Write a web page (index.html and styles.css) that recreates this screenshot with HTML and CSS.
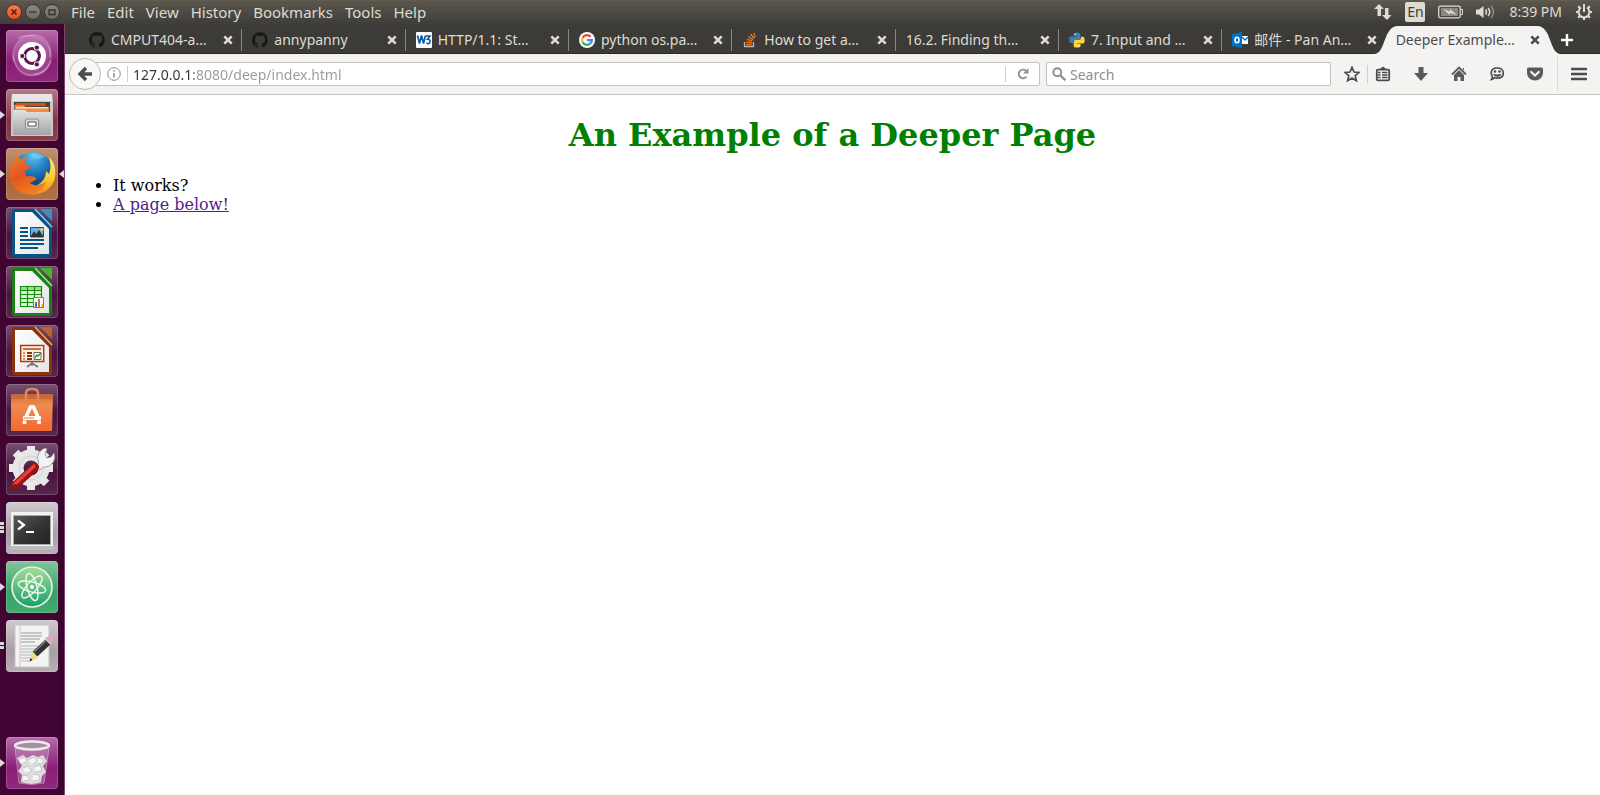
FILE: index.html
```html
<!DOCTYPE html>
<html lang="en">
<head>
<meta charset="utf-8">
<title>Deeper Example Page</title>
<link rel="stylesheet" href="styles.css">
</head>
<body>
<svg class="defs" aria-hidden="true">
  <defs>
    <linearGradient id="silver" x1="0" y1="0" x2="0" y2="1"><stop offset="0" stop-color="#e2e2e2"/><stop offset="1" stop-color="#a4a4a4"/></linearGradient>
    <linearGradient id="paper" x1="0" y1="0" x2="1" y2="1"><stop offset="0" stop-color="#fff"/><stop offset="1" stop-color="#e4e4e4"/></linearGradient>
    <linearGradient id="orange" x1="0" y1="0" x2="0" y2="1"><stop offset="0" stop-color="#c96f35"/><stop offset=".3" stop-color="#f18b50"/><stop offset="1" stop-color="#f06a30"/></linearGradient>
    <linearGradient id="screen" x1="0" y1="0" x2="1" y2="1"><stop offset="0" stop-color="#5b5b5b"/><stop offset=".5" stop-color="#353535"/><stop offset="1" stop-color="#222"/></linearGradient>
    <linearGradient id="atomg" x1="0" y1="0" x2="0" y2="1"><stop offset="0" stop-color="#a9dc9a"/><stop offset="1" stop-color="#15a06c"/></linearGradient>
    <radialGradient id="globe" cx=".5" cy=".1" r=".8"><stop offset="0" stop-color="#5cc4ee"/><stop offset=".5" stop-color="#1c76b8"/><stop offset="1" stop-color="#0b2a60"/></radialGradient>
    <linearGradient id="fox" x1="0" y1="0" x2=".6" y2="1"><stop offset="0" stop-color="#ef8034"/><stop offset=".5" stop-color="#e4551f"/><stop offset="1" stop-color="#f58420"/></linearGradient>
    <linearGradient id="flame" x1="0" y1="0" x2="0" y2="1"><stop offset="0" stop-color="#fff07a"/><stop offset=".6" stop-color="#fcc62c"/><stop offset="1" stop-color="#f4861e"/></linearGradient>
    <symbol id="close" viewBox="0 0 10 10"><path d="M1.300 1.300l7.400 7.400M8.700 1.300L1.300 8.700" fill="none" stroke="currentColor" stroke-width="2.600"/></symbol>
    <symbol id="github" viewBox="0 0 16 16"><path fill="#191717" d="M8 0a8 8 0 0 0-2.500 15.600c.4.1.5-.2.5-.4v-1.500c-2.200.5-2.700-1-2.700-1-.4-.9-.9-1.200-.9-1.200-.7-.5.1-.5.1-.5.8.1 1.200.8 1.200.8.7 1.200 1.900.9 2.300.7.1-.5.3-.9.5-1.100-1.800-.2-3.600-.9-3.600-4 0-.9.3-1.600.8-2.100-.1-.2-.4-1 .1-2.100 0 0 .7-.2 2.200.8a7.600 7.600 0 0 1 4 0c1.500-1 2.200-.8 2.200-.8.4 1.100.2 1.900.1 2.100.5.6.8 1.300.8 2.100 0 3.100-1.900 3.700-3.700 3.900.3.300.6.8.6 1.500v2.200c0 .2.1.5.6.4A8 8 0 0 0 8 0z"/></symbol>
  </defs>
</svg>

<header class="panel">
  <div class="window-buttons">
    <button class="win win-close" aria-label="Close"><svg viewBox="0 0 16 16"><path d="M5.500 5.500l5 5M10.500 5.500l-5 5" stroke="#55200c" stroke-width="1.500"/></svg></button>
    <button class="win" aria-label="Minimize"><svg viewBox="0 0 16 16"><path d="M4.500 8h7" stroke="#34332e" stroke-width="1.300"/></svg></button>
    <button class="win" aria-label="Maximize"><svg viewBox="0 0 16 16"><path d="M5 6h6v4.500H5z" fill="none" stroke="#34332e" stroke-width="1.300"/></svg></button>
  </div>
  <nav class="menus" aria-label="Menu bar">
    <button>File</button><button>Edit</button><button>View</button><button>History</button><button>Bookmarks</button><button>Tools</button><button>Help</button>
  </nav>
  <div class="indicators">
    <button aria-label="Network"><svg width="18" height="18" viewBox="0 0 18 18"><path fill="#dfdbd2" d="M5 1l5 5H7v7H3.500V6H0zM13 17l-5-5h3V5h3.500v7h3z"/></svg></button>
    <button class="lang">En</button>
    <button aria-label="Battery"><svg width="25" height="14" viewBox="0 0 25 14"><rect x=".7" y="1.200" width="21.500" height="11.600" rx="1.500" fill="none" stroke="#dfdbd2" stroke-width="1.300"/><path d="M23 4.500h1.500v5H23" fill="none" stroke="#dfdbd2"/><path d="M3 3h17v8H3z" fill="#8b887f"/><path d="M5 4l7 2.500V4l7 6-7-2.200V10z" fill="#dfdbd2"/></svg></button>
    <button aria-label="Sound"><svg width="20" height="16" viewBox="0 0 20 16"><path d="M0 5.500h3L7.500 2v12L3 10.500H0z" fill="#dfdbd2"/><g fill="none" stroke="#dfdbd2" stroke-width="1.500"><path d="M9.500 5.500q2 2.500 0 5M12 4q3.500 4 0 8"/><path opacity=".45" d="M15 2q5 6 0 12"/></g></svg></button>
    <button class="clock">8:39 PM</button>
    <button aria-label="Session"><svg width="18" height="18" viewBox="0 0 18 18"><g stroke="#dfdbd2" fill="none"><path d="M6 4.500a5.400 5.400 0 1 0 6 0" stroke-width="2"/><path d="M9 1v8" stroke-width="2"/><path stroke-width="2.200" d="M3.200 3.200l2 2M14.800 3.200l-2 2M1 9h2.500M14.500 9H17M3.200 14.800l2-2M14.800 14.800l-2-2M9 14.500V17"/></g></svg></button>
  </div>
</header>

<div class="desktop">
  <nav class="launcher" aria-label="Launcher">
    <button class="tile dash" aria-label="Dash"><svg viewBox="0 0 52 52">
      <g fill="none" stroke="#fff" stroke-opacity=".28" stroke-width="1.500"><path d="M8 32C4 16 15 6 26 5c12 0 20 9 18 22"/><path d="M12 8c10-5 31-2 33 18 0 10-8 18-17 18"/><path d="M7 25c2 14 10 20 20 20 10 0 15-6 18-14"/></g>
      <path d="M8 32C5 14 18 2 33 9c11 6 14 18 8 30-6 8-28 14-33-7z" fill="#fff" opacity=".16"/>
      <circle cx="26" cy="26" r="14" fill="#fff"/><circle cx="26" cy="26" r="7.400" fill="none" stroke="#5e1450" stroke-width="3"/>
      <g fill="#5e1450" stroke="#fff" stroke-width="1"><circle cx="16.300" cy="26" r="2.600"/><circle cx="30.800" cy="17.600" r="2.600"/><circle cx="30.800" cy="34.400" r="2.600"/></g></svg></button>
    <button class="tile files running" aria-label="Files"><svg viewBox="0 0 52 52">
      <path d="M6 5h40l1 9H5z" fill="#e6e6e6"/><path d="M5 12h42v35H5z" fill="#c9c9c9"/><path d="M8 13h36v10H8z" fill="#4b4542"/><path d="M10 14h29l1 3H9z" fill="#c9541c"/><path d="M8.500 16h9l2 2H43v5H8.500z" fill="#f28b45"/><path d="M10 18h32v1.500H10z" fill="#ffe2c5"/><path d="M7 21h12l2 2h24v23H7z" fill="url(#silver)"/><rect x="19.500" y="30" width="13" height="10" rx="2" fill="#d9d9d9" stroke="#8c8c8c"/><path d="M22 33h8v4h-8z" fill="#fff" stroke="#555"/></svg></button>
    <button class="tile firefox running focused" aria-label="Firefox"><svg viewBox="0 0 52 52">
      <circle cx="27" cy="25" r="21" fill="url(#globe)"/>
      <path d="M24 6c5-2 11-1 15 3-4 0-5 3-9 2-3-1-3-3-6-5z" fill="#8bd4f3" opacity=".5"/>
      <path d="M43 11c6 8 7 22-1 29-8 8-23 9-32 1C4 36 2 27 5 19c1-3 2-5 4-7l1-6 4 5c3-1 5-1 7-1-2 2-3 4-2 6l6 2c0 2-4 3-6 5l1 5c3 1 6-1 10 2 1 2-3 3-6 5 5 4 13 2 18-3 4-5 5-13 1-21z" fill="url(#fox)"/>
      <path d="M43 9c6 6 7 13 6 20-1 6-4 10-9 14-5 3-11 4-16 3 9-1 14-6 16-12-3 2-5 3-9 3 6-3 9-8 9-14l3 3c2-5 2-11 0-17z" fill="url(#flame)"/></svg></button>
    <button class="tile" aria-label="Writer"><svg viewBox="0 0 52 52">
      <path d="M9 2h22l15 15v29q0 4-3 4H9q-3 0-3-4V5q0-3 3-3z" fill="#075486"/><path d="M9 5h17l17 17v25H9z" fill="url(#paper)"/><path d="M29 2l17 18" stroke="#9cc6dd" stroke-width="1.500"/><path d="M34 2h12v12z" fill="#3e8fc0"/>
      <path d="M14 21h8M14 25h8M14 29h8M14 33h24M14 37h24M14 41h18" stroke="#075486" stroke-width="2"/><path d="M24.500 20.500h13v9.500h-13z" fill="#69b6e2" stroke="#075486"/><path d="M25 29l3-5 2 3 3-4 4 6v1H25z" fill="#32342e"/><circle cx="36" cy="22.500" r="1.500" fill="#f2d33a"/></svg></button>
    <button class="tile" aria-label="Calc"><svg viewBox="0 0 52 52">
      <path d="M9 2h22l15 15v29q0 4-3 4H9q-3 0-3-4V5q0-3 3-3z" fill="#188112"/><path d="M9 5h17l17 17v25H9z" fill="url(#paper)"/><path d="M29 2l17 18" stroke="#a9dd9b" stroke-width="1.500"/><path d="M34 2h12v12z" fill="#45b52c"/>
      <path d="M14.500 20.500h21v20h-21z" fill="#d9f6cf"/><path d="M14.500 20.500h21v4h-21z" fill="#96e285"/><path d="M14.500 20.500h21v20h-21zM14.500 24.500h21M14.500 28.500h21M14.500 32.500h21M14.500 36.500h21M21.500 20.500v20M28.500 20.500v20" fill="none" stroke="#168d10" stroke-width="1.200"/><path d="M27.500 31.500h10v10h-10z" fill="#fff" stroke="#777"/><path d="M29 36h2v5h-2z" fill="#2586cc"/><path d="M32 33h2v8h-2z" fill="#e96e18"/><path d="M35 38h2v3h-2z" fill="#edc62e"/></svg></button>
    <button class="tile" aria-label="Impress"><svg viewBox="0 0 52 52">
      <path d="M9 2h22l15 15v29q0 4-3 4H9q-3 0-3-4V5q0-3 3-3z" fill="#8b3309"/><path d="M9 5h17l17 17v25H9z" fill="url(#paper)"/><path d="M29 2l17 18" stroke="#dcae90" stroke-width="1.500"/><path d="M34 2h12v12z" fill="#b9622f"/>
      <path d="M14.700 20.500h23v16h-23z" fill="#fff4e9" stroke="#a64013" stroke-width="1.500"/><path d="M17 24h18" stroke="#df682c" stroke-width="2"/><path d="M17 28h2M17 31h2M17 34h2" stroke="#df682c" stroke-width="1.500"/><path d="M21 28h5M21 31h5M21 34h5" stroke="#8b3309" stroke-width="2"/><path d="M28 27.500h7v7h-7z" fill="#fff" stroke="#666"/><path d="M29 33l2-3 1 1 3-3" fill="none" stroke="#349420" stroke-width="1.400"/><path d="M21 42l5-4 6 4M26 37v4" fill="none" stroke="#777" stroke-width="1.700"/></svg></button>
    <button class="tile" aria-label="Software"><svg viewBox="0 0 52 52">
      <path d="M5 10h42l-1 37H5z" fill="url(#orange)"/><path d="M5 10h42v5H5z" fill="#bc6030" opacity=".5"/><path d="M20 17V9q0-4 6-4t6 4v8" fill="none" stroke="#e58462" stroke-width="2.500"/><path d="M20 33l4.500-10h3L32 33" fill="none" stroke="#fff" stroke-width="3.600"/><rect x="17" y="32" width="18" height="4" rx="1" fill="#fff"/><path d="M18 34h10" stroke="#ee743a"/><path d="M18.500 36.500v3.500M33 36.500v3.500" stroke="#fff" stroke-width="3.600"/></svg></button>
    <button class="tile" aria-label="System Settings"><svg viewBox="0 0 52 52">
      <g transform="translate(25 25)"><circle r="13" fill="none" stroke="#e6e6e6" stroke-width="11"/><g stroke="#e9e9e9" stroke-width="8"><path d="M0-22V-15M0 15V22M-22 0h7M15 0h7M-15.500-15.500l5 5M10.500 10.500l5 5M-15.500 15.500l5-5M10.500-10.500l5-5"/></g><circle r="12" fill="none" stroke="#d2d2d2"/></g>
      <path d="M33 20c-3-6-1-12 6-15l2 1-2 5 2 4 4-1 3-4c3 7-3 15-11 14l-3 3-5-4z" fill="#f3f3f3" stroke="#8e8e8e" stroke-width=".8"/><path d="M9.500 42L29 24" stroke="#9e1111" stroke-width="8" stroke-linecap="round"/><path d="M9 41L28 23" stroke="#e04040" stroke-width="3.500" stroke-linecap="round"/><circle cx="9.500" cy="42.500" r="1.500" fill="#621"/></svg></button>
    <button class="tile grey triple" aria-label="Terminal"><svg viewBox="0 0 52 52">
      <path d="M5 10h42v36H5z" fill="#f1f1f1"/><path d="M3 44h46v4H3z" fill="#bcbcbc"/><path d="M7.500 13.500h37v29h-37z" fill="url(#screen)" stroke="#aaa"/><path d="M12 18.500l6 4.500-6 4.500M20 30h8" fill="none" stroke="#fff" stroke-width="2.200"/></svg></button>
    <button class="tile atom running" aria-label="Atom"><svg viewBox="0 0 52 52">
      <circle cx="26" cy="26" r="20" fill="url(#atomg)" stroke="#e6f2df" stroke-width="1.700"/><g fill="none" stroke="#f1f9e9" stroke-width="1.400"><ellipse cx="26" cy="26" rx="14" ry="5" transform="rotate(15 26 26)"/><ellipse cx="26" cy="26" rx="14" ry="5" transform="rotate(75 26 26)"/><ellipse cx="26" cy="26" rx="14" ry="5" transform="rotate(132 26 26)"/></g><circle cx="26" cy="26" r="2" fill="#fff"/></svg></button>
    <button class="tile grey double" aria-label="Text Editor"><svg viewBox="0 0 52 52">
      <path d="M9 5h34v42H9z" fill="#f2f4f4" stroke="#c5c5c5"/><path d="M14 5v42" stroke="#e7a8a8" stroke-width=".8"/><g stroke="#999"><path d="M15 13h21M15 16h21M15 19h19M15 22h14"/><path d="M15 26h21M15 29h21M15 32h18M15 35h17M15 38h11M15 41h9" opacity=".7"/></g><path d="M29 34L42 22" stroke="#333" stroke-width="7"/><path d="M28 32l13-12" stroke="#777" stroke-width="1.500"/><path d="M39 18l6 6" stroke="#ccc" stroke-width="2"/><path d="M40 18l3-2q2-1 4 1.500 1.500 2 0 3.500l-2 2z" fill="#e4a0c8"/><path d="M26 32l6 6-8 3z" fill="#f0dc80"/><path d="M24.500 38l2 2-3 1.500z" fill="#222"/></svg></button>
    <button class="tile dash trash running" aria-label="Trash"><svg viewBox="0 0 52 52">
      <path d="M9 10h34l-5 36H14z" fill="#fff" opacity=".22"/><path d="M9 11l4 35q13 3 25 0l5-35" fill="none" stroke="#ddd" stroke-opacity=".5"/><path d="M11 21l6-3 4 3 6-3 5 2 5-2 4 6-4 5 3 6-4 4-1 6q-9 4-20 0l1-7-4-4 4-5z" fill="#dedede"/><path d="M13 22l6-2 2 5-6 2M22 23l6-3 3 4-5 4M32 21l6 1-2 5-5-1M17 31l5-2 4 5-6 3M28 30l6-2 2 6-6 1M16 39l5-1 3 5-6 1M27 37l6 1 1 5-7 1" fill="#f5f5f5" stroke="#b5b5b5" stroke-width=".7"/><ellipse cx="26" cy="8.500" rx="17" ry="4" fill="#a390a0" stroke="#ececec" stroke-width="2.500"/></svg></button>
  </nav>

  <section class="browser">
    <div class="tabs">
      <div class="tab"><svg class="fav"><use href="#github"/></svg><span>CMPUT404-a…</span><button class="x" aria-label="Close tab"><svg><use href="#close"/></svg></button></div>
      <div class="tab"><svg class="fav"><use href="#github"/></svg><span>annypanny</span><button class="x" aria-label="Close tab"><svg><use href="#close"/></svg></button></div>
      <div class="tab"><svg class="fav" viewBox="0 0 16 16"><rect width="16" height="16" rx="1" fill="#fff"/><path d="M1.500 3.500l2 8 2-8 2 8 2-8" fill="none" stroke="#0d5aa4" stroke-width="1.700"/><path d="M10 4h4l-2.500 3.200q3 .3 2.600 2.600-.7 2.600-3.800 1.400" fill="none" stroke="#0d5aa4" stroke-width="1.600"/></svg><span>HTTP/1.1: St…</span><button class="x" aria-label="Close tab"><svg><use href="#close"/></svg></button></div>
      <div class="tab"><svg class="fav" viewBox="0 0 16 16"><circle cx="8" cy="8" r="8" fill="#fff"/><g fill="none" stroke-width="2.200"><path d="M11.600 4.700A4.900 4.900 0 0 0 3.700 5.700" stroke="#ea4335"/><path d="M3.700 5.700a4.900 4.900 0 0 0 0 4.600" stroke="#fbbc05"/><path d="M3.700 10.300a4.900 4.900 0 0 0 7.600 1.200" stroke="#34a853"/><path d="M11.300 11.500A4.900 4.900 0 0 0 12.900 8.100H8" stroke="#4285f4"/></g></svg><span>python os.pa…</span><button class="x" aria-label="Close tab"><svg><use href="#close"/></svg></button></div>
      <div class="tab"><svg class="fav" viewBox="0 0 16 16"><path d="M2.500 10v4.500h9V10" fill="none" stroke="#b4b6b8" stroke-width="1.300"/><path d="M4.200 12.500h5.700M4.300 10l5.700.7M4.900 7.300l5.400 1.600M6.300 4.500l4.700 3.200M8.700 2l3.300 4.500M12 .8l1 4.800" stroke="#ef7714" stroke-width="1.300"/></svg><span>How to get a…</span><button class="x" aria-label="Close tab"><svg><use href="#close"/></svg></button></div>
      <div class="tab"><span>16.2. Finding th…</span><button class="x" aria-label="Close tab"><svg><use href="#close"/></svg></button></div>
      <div class="tab"><svg class="fav" viewBox="0 0 16 16"><path d="M4.500 4V2q0-1.600 3.500-1.600T11.300 2v4.200Q11.300 8 9.500 8H6.200Q4 8 4 10.500v.8H2.300Q.3 11.300.3 7.800T2.300 4.500H8V4z" fill="#3c7fb5"/><path d="M11.500 12v2q0 1.600-3.500 1.600T4.700 14V9.800Q4.700 8 6.500 8h3.300Q12 8 12 5.500v-.8h1.700q2 0 2 3.500t-2 3.300H8v.5z" fill="#ffd43b"/><circle cx="6.300" cy="2.300" r=".7" fill="#fff"/><circle cx="9.700" cy="13.700" r=".7" fill="#fff"/></svg><span>7. Input and …</span><button class="x" aria-label="Close tab"><svg><use href="#close"/></svg></button></div>
      <div class="tab last"><svg class="fav" viewBox="0 0 16 16"><path d="M0 2l10-2v16L0 14z" fill="#0072c6"/><path d="M10 4h6v8h-6z" fill="#fff"/><path d="M10 5l3 3 3-3" fill="none" stroke="#0072c6" stroke-width="1.400"/><ellipse cx="5" cy="8" rx="2" ry="2.700" fill="none" stroke="#fff" stroke-width="1.600"/></svg><span>邮件 - Pan An…</span><button class="x" aria-label="Close tab"><svg><use href="#close"/></svg></button></div>
      <div class="tab active"><svg class="curve curve-l" viewBox="0 0 24 28"><path d="M0 28C12 28 9 0 24 0v28z" fill="#f4f3f1"/></svg><svg class="curve curve-r" viewBox="0 0 24 28"><path d="M24 28C12 28 15 0 0 0v28z" fill="#f4f3f1"/></svg><span>Deeper Example…</span><button class="x" aria-label="Close tab"><svg><use href="#close"/></svg></button></div>
      <button class="new-tab" aria-label="New tab"><svg width="14" height="14" viewBox="0 0 14 14"><path d="M7 1v12M1 7h12" stroke="#fff" stroke-width="2.400"/></svg></button>
    </div>

    <div class="toolbar">
      <button class="back" aria-label="Back"><svg width="16" height="16" viewBox="0 0 16 16"><path d="M9 2L3 8l6 6M3.500 8H15" fill="none" stroke="#4c4c4c" stroke-width="3.400"/></svg></button>
      <div class="field address">
        <svg width="14" height="14" viewBox="0 0 14 14"><circle cx="7" cy="7" r="6.300" fill="none" stroke="#8d8d8d"/><path d="M7 6v4.500M7 3.200v1.600" stroke="#8d8d8d" stroke-width="1.500"/></svg>
        <i class="rule"></i>
        <input class="url" aria-label="Address" value="127.0.0.1:8080/deep/index.html">
        <i class="rule"></i>
        <button class="reload" aria-label="Reload"><svg width="12" height="12" viewBox="0 0 12 12"><path d="M9.500 8.500A4.300 4.300 0 1 1 9 2.800" fill="none" stroke="#8795a1" stroke-width="1.900"/><path d="M11.500 0v5.500H6z" fill="#8795a1"/></svg></button>
      </div>
      <div class="field search">
        <svg width="14" height="14" viewBox="0 0 14 14"><circle cx="5.300" cy="5.300" r="4" fill="none" stroke="#8e8e8e" stroke-width="1.900"/><path d="M8.300 8.300l5 5" stroke="#8e8e8e" stroke-width="2.300"/></svg>
        <input aria-label="Search" placeholder="Search">
      </div>
      <div class="tools">
        <button aria-label="Bookmark"><svg viewBox="0 0 16 16"><path d="M8 1.300l2 4.700 5 .4-3.800 3.300 1.200 5L8 12l-4.400 2.700 1.200-5L1 6.400 6 6z" fill="none" stroke="#4c4c4c" stroke-width="1.700"/></svg></button>
        <i class="rule"></i>
        <button aria-label="Bookmarks list"><svg viewBox="0 0 16 16"><path d="M4 3.500L8 .5l4 3" fill="#4c4c4c"/><rect x="1.800" y="3.700" width="12.400" height="10.600" rx="1" fill="none" stroke="#4c4c4c" stroke-width="1.800"/><path d="M3 6.500h2.500M3 9h2.500M3 11.500h2.500M7 6.500h5.500M7 9h5.500M7 11.500h5.500" stroke="#4c4c4c" stroke-width="1.500"/></svg></button>
        <button aria-label="Downloads"><svg viewBox="0 0 16 16"><path d="M5.500 1h5v6H15l-7 8-7-8h4.500z" fill="#5a5a5a"/></svg></button>
        <button aria-label="Home"><svg viewBox="0 0 16 16"><path d="M1 8.500l7-7 7 7" fill="none" stroke="#5a5a5a" stroke-width="1.800"/><path d="M3 9l5-5 5 5v6H9.500v-4h-3v4H3zM11.500 2H13v3z" fill="#5a5a5a"/></svg></button>
        <button aria-label="Chat"><svg viewBox="0 0 16 16"><path d="M8.300 2c3.700 0 6 1.800 6 5s-2.300 5.200-6 5.200c-1 0-2-.1-2.800-.4-.8 1-1.800 1.500-3 1.700.5-.7.900-1.700.9-2.900C2.600 9.700 2.200 8.400 2.200 7c0-3.200 2.400-5 6.100-5z" fill="#f4f3f1" stroke="#4c4c4c" stroke-width="1.700"/><circle cx="6" cy="5.500" r="1.300" fill="#4c4c4c"/><circle cx="10.500" cy="5.500" r="1.300" fill="#4c4c4c"/><path d="M4 7.700q4.200 1.500 8.500 0-.8 3-4.200 3T4 7.700z" fill="#4c4c4c"/></svg></button>
        <button aria-label="Pocket"><svg viewBox="0 0 16 16"><path d="M1.500 1.500h13Q16 1.500 16 3v4a8 7.500 0 0 1-16 0V3q0-1.500 1.500-1.500z" fill="#5a5a5a"/><path d="M4.200 6L8 9.500 11.800 6" fill="none" stroke="#f4f3f1" stroke-width="2.200" stroke-linecap="round"/></svg></button>
      </div>
      <button class="hamburger" aria-label="Menu"><svg width="16" height="14" viewBox="0 0 16 14"><path d="M1 2h14M1 7h14M1 12h14" stroke="#4c4c4c" stroke-width="2.600" stroke-linecap="round"/></svg></button>
    </div>

    <main class="page">
      <h1>An Example of a Deeper Page</h1>
      <ul>
        <li>It works?</li>
        <li><a href="#below">A page below!</a></li>
      </ul>
    </main>
  </section>
</div>
</body>
</html>
```
FILE: styles.css
```css
* { box-sizing: border-box; }
body { margin: 0; min-height: 100vh; display: flex; flex-direction: column; font-family: "Noto Sans", "Noto Sans CJK SC", sans-serif; font-size: 14px; background: #fff; }
button { appearance: none; border: 0; padding: 0; margin: 0; background: none; font: inherit; color: inherit; display: flex; align-items: center; justify-content: center; }
svg { display: block; flex: none; }
.defs { position: absolute; width: 0; height: 0; }

.panel { display: flex; align-items: center; height: 24px; padding: 0 7px 0 6px; background: linear-gradient(#66624f 0, #5b574e 1px, #3e3d39 24px); color: #dfdbd2; }
.panel button { line-height: 20px; }
.window-buttons { display: flex; gap: 3px; }
.win { width: 16px; height: 16px; border-radius: 50%; background: linear-gradient(#8b8880, #6c6a62); border: 1px solid #383732; }
.win svg { width: 16px; height: 16px; }
.win-close { background: linear-gradient(#f47c54, #e4501e); border-color: #5b2c1b; }
.menus { display: flex; gap: 12px; margin-left: 11px; font-size: 15px; }
.indicators { display: flex; align-items: center; margin-left: auto; gap: 13px; }
.lang { width: 20px; height: 20px; border-radius: 2px; background: #dfdbd2; color: #3f3e3a; }

.desktop { flex: 1; display: flex; }
.launcher { flex: none; width: 65px; padding: 6px 0 6px 6px; display: flex; flex-direction: column; gap: 7px; background: linear-gradient(90deg, #400533 58px, #35042b); border-right: 1px solid #80456f; }
.tile { position: relative; width: 52px; height: 52px; border-radius: 4px; background: linear-gradient(#765071, #48143e 55%, #59264e); box-shadow: inset 0 0 0 1px #ffffff2e; }
.tile > svg { width: 52px; height: 52px; }
.dash { background: linear-gradient(#b66ba9, #8b1d78 60%, #8f2a7d); }
.files { background: linear-gradient(#b47b83, #833442 60%, #894250); }
.firefox { background: linear-gradient(#c29275, #a9683a 60%, #ad7448); }
.grey { background: linear-gradient(#d0cacd, #a89ea4 60%, #b7aeb3); }
.atom { background: linear-gradient(#85c69c, #35a268 60%, #44aa70); }
.trash { margin-top: auto; }
.running::before, .focused::after { content: ""; position: absolute; top: 22px; border: 4px solid transparent; }
.running::before { left: -6px; border-left: 5px solid #ddd6da; border-right: 0; }
.focused::after { right: -6px; border-right: 5px solid #ddd6da; border-left: 0; }
.triple::before, .double::before { content: ""; position: absolute; left: -6px; width: 4px; background: repeating-linear-gradient(#ddd6da 0 3px, transparent 3px 4px); }
.triple::before { top: 20px; height: 11px; }
.double::before { top: 22px; height: 7px; }

.browser { flex: 1; min-width: 0; display: flex; flex-direction: column; }
.tabs { display: flex; height: 30px; padding-left: 14px; background: #3c3b37; border-bottom: 1px solid #2b2a27; color: #dfdbd2; }
.tab { position: relative; flex: 1; min-width: 0; display: flex; align-items: center; gap: 6px; padding: 2px 9px 0 10px; background: linear-gradient(#8a8883, #8a8883) right 0 top 5px / 1px 22px no-repeat; }
.tab.last, .tab.active { background: none; }
.tab span { flex: 1; min-width: 0; white-space: nowrap; line-height: 20px; }
.fav { width: 16px; height: 16px; }
.x svg { width: 10px; height: 10px; }
.active { z-index: 1; color: #4c4c4c; }
.tab.active::before { content: ""; position: absolute; z-index: -1; top: 2px; bottom: -1px; left: 12px; right: 12px; background: #f4f3f1; }
.curve { position: absolute; z-index: -1; top: 2px; width: 24px; height: 28px; }
.curve-l { left: -12px; }
.curve-r { right: -12px; }
.new-tab { flex: none; width: 51px; padding: 2px 14px 0 0; }

.toolbar { display: flex; align-items: center; height: 41px; padding-left: 4px; background: #f4f3f1; border-bottom: 1px solid #c9c7c4; }
.back { position: relative; flex: none; width: 32px; height: 32px; border: 1px solid #bcbab7; border-radius: 50%; background: #f9f8f7; margin-right: -6px; }
.field { display: flex; align-items: center; height: 24px; background: #fff; border: 1px solid #c3c0bd; border-radius: 2px; }
.field input { flex: 1; min-width: 0; width: 0; height: 22px; padding: 0; border: 0; outline: 0; background: none; font: inherit; color: #333; }
.field input::placeholder { color: #8e8e8e; opacity: 1; }
.address { flex: 1; padding-left: 11px; }
.field .url { margin-left: 5px; background: linear-gradient(90deg, #333 61px, #999 61px); background-clip: text; -webkit-background-clip: text; -webkit-text-fill-color: transparent; }
.rule { flex: none; width: 1px; height: 16px; background: #cfcfcf; }
.address svg + .rule { margin-left: 6px; }
.reload { width: 33px; height: 22px; }
.search { flex: 0 1 285px; margin-left: 6px; padding-left: 5px; gap: 4px; }
.tools { display: flex; align-items: center; height: 40px; gap: 22px; padding: 0 14px 0 13px; }
.tools svg { width: 16px; height: 16px; }
.tools .rule { margin: 0 -15px; height: 18px; }
.hamburger { width: 43px; height: 34px; border-left: 1px solid #dcdad7; }

.page { flex: 1; padding: 8px; background: #fff; color: #000; font-family: "DejaVu Serif", serif; font-size: 16px; line-height: 19px; }
.page h1 { margin: 13px 0 22px; text-align: center; color: green; font-size: 32px; line-height: 38px; }
.page ul { margin: 0; padding-left: 40px; }
.page a { color: #551a8b; }
```
